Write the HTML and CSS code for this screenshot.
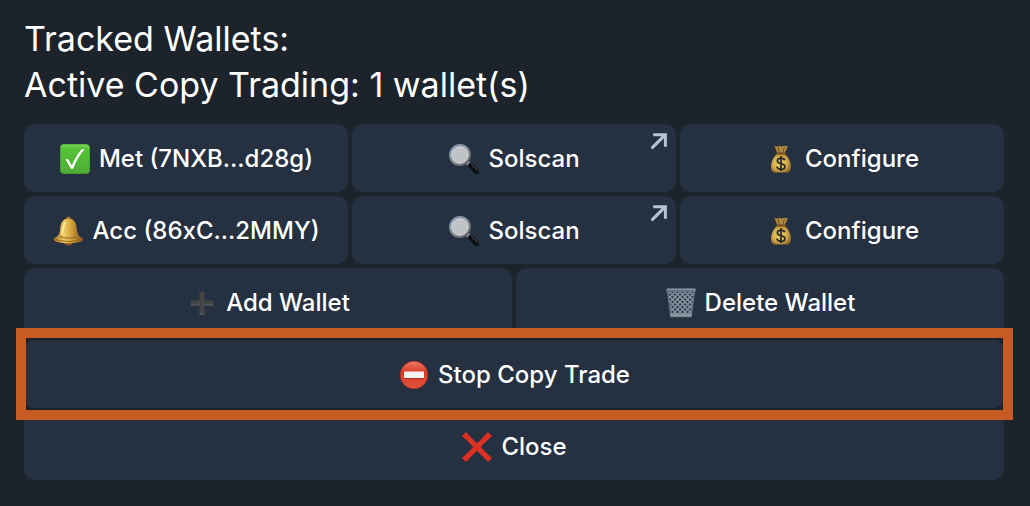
FILE: index.html
```html
<!DOCTYPE html>
<html lang="en">
<head>
    <meta charset="UTF-8">
    <title>Tracked Wallets</title>
    <link rel="stylesheet" href="styles.css">
</head>
<body>

<!-- shared icons -->
<svg class="defs" aria-hidden="true">
    <defs>
        <linearGradient id="green" x1="0" y1="0" x2="0" y2="1">
            <stop offset="0" stop-color="#7ad65a"/>
            <stop offset="0.15" stop-color="#55c338"/>
            <stop offset="1" stop-color="#4eae34"/>
        </linearGradient>
        <linearGradient id="gold" x1="0" y1="0" x2="1" y2="0">
            <stop offset="0" stop-color="#a06f20"/>
            <stop offset="0.35" stop-color="#f0cc68"/>
            <stop offset="0.6" stop-color="#d2a03a"/>
            <stop offset="1" stop-color="#80521a"/>
        </linearGradient>
        <radialGradient id="sack" cx="0.45" cy="0.5" r="0.6">
            <stop offset="0" stop-color="#f0cf70"/>
            <stop offset="0.6" stop-color="#d5ac4c"/>
            <stop offset="1" stop-color="#8b6426"/>
        </radialGradient>
        <linearGradient id="rim" x1="0" y1="0" x2="1" y2="1">
            <stop offset="0" stop-color="#8299b5"/>
            <stop offset="0.5" stop-color="#8b8e92"/>
            <stop offset="1" stop-color="#55585c"/>
        </linearGradient>
        <linearGradient id="red" x1="0" y1="0" x2="0" y2="1">
            <stop offset="0" stop-color="#ef7a66"/>
            <stop offset="0.4" stop-color="#d93a25"/>
            <stop offset="1" stop-color="#e2533a"/>
        </linearGradient>
        <pattern id="mesh" width="5" height="5" patternUnits="userSpaceOnUse">
            <rect width="5" height="5" fill="#2f3b4a"/>
            <path d="M0 0L5 5M5 0L0 5" stroke="#8996a3" stroke-width="1.3"/>
        </pattern>
    </defs>
    <symbol id="check" viewBox="0 0 32 32">
        <rect x="1" y="1" width="30" height="30" rx="4" fill="#3f962a"/>
        <rect x="1.6" y="1.6" width="28.8" height="28.4" rx="3.5" fill="url(#green)"/>
        <path d="M6.5 16.5c1.5-.9 2.6-.4 3.4 1l3 5C15.5 16 19 10.5 22.300 6.800c.8-.9 2-1.100 3.200-.6C20.500 12 17 18.300 14.500 25c-.5 1.300-2.300 1.300-3 .1z" fill="#fff"/>
    </symbol>
    <symbol id="bell" viewBox="0 0 32 32">
        <ellipse cx="15.5" cy="27.5" rx="4" ry="3" fill="#8a501c"/>
        <circle cx="15.5" cy="3.6" r="2.2" fill="#9c7226"/>
        <path d="M15.5 3.5c5.500 0 8 4.500 8.300 10 .3 5 1.700 7.500 5.700 9.500 1.200.7.800 2.500-.7 3.200-7 2.800-19.600 2.800-26.600 0-1.500-.7-1.900-2.500-.7-3.200 4-2 5.400-4.500 5.700-9.500.3-5.500 2.800-10 8.300-10z" fill="url(#gold)"/>
        <path d="M6.5 21.5c5 2 13 2 18 0M2.5 24.5c7 2.500 19 2.500 26 0" fill="none" stroke="#966721" stroke-width="1"/>
        <path d="M12 8c-2 3-2 7-3 11" fill="none" stroke="#ffe89c" stroke-width="2" stroke-linecap="round"/>
    </symbol>
    <symbol id="glass" viewBox="0 0 32 32">
        <path d="M19.5 19.5L23 23" stroke="#92979c" stroke-width="4"/>
        <path d="M22.5 22.5L28.5 28.5" stroke="#0e1013" stroke-width="5" stroke-linecap="round"/>
        <path d="M23.5 21.5L29.5 27.5" stroke="#55595e" stroke-width="1"/>
        <circle cx="12" cy="12" r="9.8" fill="#c1c4c7" stroke="url(#rim)" stroke-width="2.4"/>
        <circle cx="12" cy="12" r="8.2" fill="#c0c3c6" stroke="#d9dcde" stroke-width="0.8"/>
    </symbol>
    <symbol id="bag" viewBox="0 0 32 32">
        <path d="M9.5 3c2 1 3 0 4.500 0s3 1 4.500 0 3 .8 4.500 0l-3.500 7.500h-7z" fill="#b28a43"/>
        <path d="M13 4l1.500 6M19.500 4l-2 6" stroke="#6e5020" stroke-width="1"/>
        <path d="M12.5 10.500h7c3.500 3 6.500 8 6.500 13 0 4.500-2 6-4.500 6h-11C8 29.500 6 28 6 23.500c0-5 3-10 6.500-13z" fill="url(#sack)"/>
        <path d="M12 10.500h8" stroke="#72501f" stroke-width="2" stroke-linecap="round"/>
        <path d="M19.8 17.300c-.6-1.500-2-2.100-3.800-2.100-2.100 0-3.600 1-3.600 2.700 0 4 7.500 1.700 7.500 5.500 0 1.800-1.600 2.900-3.900 2.900-2.200 0-3.700-.9-4.100-2.700M16 13v15" fill="none" stroke="#292a28" stroke-width="1.7"/>
    </symbol>
    <symbol id="plus" viewBox="0 0 32 32">
        <path d="M13.500 4.500h5v9h8.500v5h-8.500v9h-5v-9H5v-5h8.500z" fill="#424445"/>
        <path d="M5 18h8.500M18.500 18H27M13.500 27h5" stroke="#606364" stroke-width="1"/>
    </symbol>
    <symbol id="trash" viewBox="0 0 32 32">
        <path d="M2.500 3.500h27l-3.500 26H6z" fill="url(#mesh)" stroke="#667483" stroke-width="1.5"/>
        <path d="M5.500 28h21" stroke="#8c98a4" stroke-width="3"/>
        <rect x="1" y="1.5" width="30" height="3.5" rx="1.5" fill="#657383"/>
        <path d="M2 2.200h28" stroke="#98a3ae" stroke-width="1"/>
    </symbol>
    <symbol id="stop" viewBox="0 0 32 32">
        <circle cx="16" cy="16" r="14" fill="#b83524"/>
        <circle cx="16" cy="16" r="13.2" fill="url(#red)"/>
        <rect x="6" y="12.5" width="20" height="7" fill="#f4f2ef"/>
        <path d="M6 19.500h20" stroke="#a82b1c" stroke-width="1"/>
    </symbol>
    <symbol id="cross" viewBox="0 0 32 32">
        <path d="M5 1C8.500 4.500 12 8.500 16 12.300 20 8.500 23.500 4.500 27 1l4 4C27 8.500 23.500 12 19.800 16c3.700 4 7.200 7.500 11.200 11l-4 4C23.500 27.500 20 23.500 16 19.700 12 23.500 8.500 27.500 5 31l-4-4c4-3.500 7.500-7 11.200-11C8.500 12 5 8.500 1 5z" fill="#dc3022"/>
    </symbol>
    <symbol id="arrow" viewBox="0 0 16 16">
        <path d="M1.500 14.500L14 2M3 1.700h11.500V13" fill="none" stroke="#b3c3d8" stroke-width="2.8"/>
    </symbol>
</svg>

<main class="message">
    <p class="text">Tracked Wallets:<br>Active Copy Trading: 1 wallet(s)</p>

    <div class="keyboard">
        <div class="row">
            <button type="button" class="key"><svg class="icon"><use href="#check"/></svg>Met (7NXB...d28g)</button>
            <a href="#" class="key"><svg class="icon"><use href="#glass"/></svg>Solscan<svg class="external"><use href="#arrow"/></svg></a>
            <button type="button" class="key"><svg class="icon"><use href="#bag"/></svg>Configure</button>
        </div>
        <div class="row">
            <button type="button" class="key"><svg class="icon"><use href="#bell"/></svg>Acc (86xC...2MMY)</button>
            <a href="#" class="key"><svg class="icon"><use href="#glass"/></svg>Solscan<svg class="external"><use href="#arrow"/></svg></a>
            <button type="button" class="key"><svg class="icon"><use href="#bag"/></svg>Configure</button>
        </div>
        <div class="row">
            <button type="button" class="key"><svg class="icon"><use href="#plus"/></svg>Add Wallet</button>
            <button type="button" class="key"><svg class="icon"><use href="#trash"/></svg>Delete Wallet</button>
        </div>
        <div class="row highlight">
            <button type="button" class="key"><svg class="icon"><use href="#stop"/></svg>Stop Copy Trade</button>
        </div>
        <div class="row">
            <button type="button" class="key"><svg class="icon"><use href="#cross"/></svg>Close</button>
        </div>
    </div>
</main>

</body>
</html>
```
FILE: styles.css
```css
body {
    margin: 0;
    background-color: #1c232b;
    color: #fff;
    font-family: Inter, "Liberation Sans", sans-serif;
}
.defs {
    position: absolute;
    width: 0;
    height: 0;
}
.message {
    padding: 16px 26px 26px 24px;
}
.text {
    margin: 0 0 16px;
    font-size: 34px;
    font-weight: 400;
    line-height: 46px;
}
.keyboard {
    display: flex;
    flex-direction: column;
    gap: 4px;
}
.row {
    display: flex;
    gap: 4px;
}
.key {
    position: relative;
    flex: 1 1 0;
    display: flex;
    justify-content: center;
    align-items: center;
    gap: 8px;
    box-sizing: border-box;
    padding: 19px 8px 17px;
    border: none;
    border-radius: 10px;
    background-color: #253040;
    color: #fff;
    font-family: inherit;
    font-size: 24px;
    font-weight: 500;
    line-height: 32px;
    text-decoration: none;
    white-space: nowrap;
    cursor: pointer;
}
.icon {
    width: 32px;
    height: 32px;
}
.external {
    position: absolute;
    top: 9px;
    right: 9px;
    width: 17px;
    height: 17px;
}
/* frame drawn over the neighbouring rows */
.highlight {
    position: relative;
    z-index: 1;
}
.highlight::after {
    content: "";
    position: absolute;
    inset: -12px -9px -12px -8px;
    border: 10px solid #c85a24;
    pointer-events: none;
}
```
